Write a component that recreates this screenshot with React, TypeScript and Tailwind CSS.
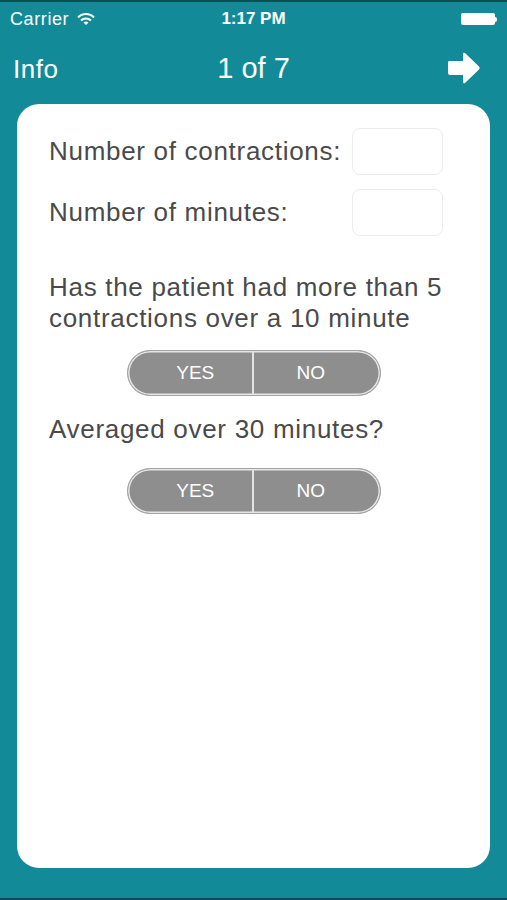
import React from "react";

function Segment({ className = "" }: { className?: string }) {
  return (
    <div className={`flex justify-center tracking-normal ${className}`}>
      <div className="flex h-[46px] w-[254px] overflow-hidden rounded-full border border-[#a3a3a3] bg-[#8e8e8e] shadow-[inset_0_0_0_1.5px_#e6e6e6]">
        <div className="flex flex-1 items-center justify-center border-r-2 border-[#e3e3e3] pl-[11px] text-[19px] text-white">YES</div>
        <div className="flex flex-1 items-center justify-center pr-[12px] text-[19px] text-white">NO</div>
      </div>
    </div>
  );
}

export default function App() {
  return (
    <div
      className="flex h-[900px] w-[507px] flex-col bg-[#138a98]"
      style={{ fontFamily: '"Liberation Sans", Arial, sans-serif' }}
    >
      <div className="h-[2px] bg-[#0c4c55]" />
      {/* status bar */}
      <div className="relative flex h-[34px] items-center px-[10px] text-white">
        <span className="text-[18px] tracking-[0.6px]">Carrier</span>
        <svg className="ml-[8px]" width="18" height="13" viewBox="0 0 18 13">
          <path d="M1 4.5 A11 11 0 0 1 17 4.5" stroke="white" strokeWidth="2" fill="none" />
          <path d="M4 7.5 A7 7 0 0 1 14 7.5" stroke="white" strokeWidth="2" fill="none" />
          <path d="M9 12 L6.5 9.6 A3.6 3.6 0 0 1 11.5 9.6 Z" fill="white" />
        </svg>
        <span className="absolute left-0 right-0 text-center text-[17px] font-bold">1:17 PM</span>
        <div className="ml-auto flex items-center">
          <div className="h-[12px] w-[34px] rounded-[2px] bg-white" />
          <div className="h-[5px] w-[2px] rounded-r-sm bg-white" />
        </div>
      </div>
      {/* nav bar */}
      <div className="relative flex h-[66px] items-center px-[13px] text-white">
        <span className="text-[26px] tracking-[0.5px]">Info</span>
        <span className="absolute left-0 right-0 text-center text-[29px]">1 of 7</span>
        <svg className="ml-auto mr-[12px] -mt-[2px]" width="36" height="36" viewBox="0 0 36 36">
          <path
            d="M3 11 Q2 11 2 13 L2 23 Q2 25 4 25 L17 25 L17 32 Q17 34 19 33 L33 19.5 Q34.5 18 33 16.5 L19 3 Q17 2 17 4 L17 11 Z"
            fill="white"
          />
        </svg>
      </div>
      {/* card */}
      <div className="mx-[17px] mt-[2px] h-[764px] rounded-[22px] bg-white pl-[32px] pr-[32px] pt-[24px] text-[26px] tracking-[0.7px] text-[#4a4a4a]">
        <div className="flex items-center justify-between pr-[15px]">
          <span>Number of contractions:</span>
          <div className="h-[47px] w-[91px] rounded-[8px] border border-[#ececec]" />
        </div>
        <div className="mt-[14px] flex items-center justify-between pr-[15px]">
          <span>Number of minutes:</span>
          <div className="h-[47px] w-[91px] rounded-[8px] border border-[#ececec]" />
        </div>
        <p className="mt-[36px] leading-[31px]">
          Has the patient had more than 5<br />contractions over a 10 minute
        </p>
        <Segment className="mt-[16px]" />
        <p className="mt-[18px] leading-[31px]">Averaged over 30 minutes?</p>
        <Segment className="mt-[23px]" />
      </div>
      <div className="flex-1" />
      <div className="h-[2px] bg-[#0c4c55]" />
    </div>
  );
}
